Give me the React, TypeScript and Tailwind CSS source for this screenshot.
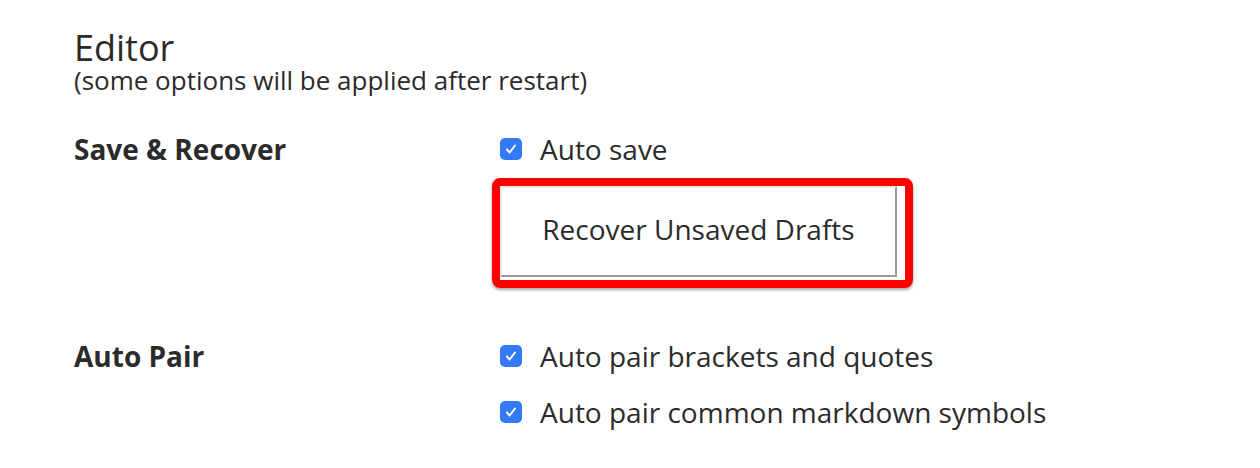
import React, { useState } from 'react';

const Checkbox: React.FC<{ label: string }> = ({ label }) => {
  const [checked, setChecked] = useState(true);
  return (
    <label className="flex h-[56px] items-center gap-[18px] cursor-pointer">
      <button
        type="button"
        onClick={() => setChecked(!checked)}
        className={`flex h-[22px] w-[22px] items-center justify-center rounded-[5px] ${checked ? 'bg-[#3479f6]' : 'border-2 border-gray-400 bg-white'}`}
      >
        {checked && (
          <svg width="14" height="14" viewBox="0 0 14 14" fill="none">
            <path d="M3 7.5l2.6 3L11 3.5" stroke="white" strokeWidth="2" strokeLinecap="round" strokeLinejoin="round" />
          </svg>
        )}
      </button>
      <span className="text-[28px] text-[#2b2b2b]">{label}</span>
    </label>
  );
};

export default function App() {
  return (
    <div className="min-h-[468px] w-[1260px] bg-white pl-[74px] pt-[29px] font-['Open_Sans',sans-serif] text-[#2b2b2b]">
      {/* Header */}
      <h1 className="text-[36px] leading-[38px]">Editor</h1>
      <p className="text-[26px] leading-[26px]">(some options will be applied after restart)</p>

      {/* Save & Recover */}
      <div className="mt-[28px] grid grid-cols-[426px_1fr]">
        <div className="flex h-[56px] items-center text-[28px] font-bold">Save &amp; Recover</div>
        <div>
          <Checkbox label="Auto save" />
          <div className="-ml-[8px] mt-[1px] w-[421px] rounded-[8px] border-[8px] border-[#ff0000] shadow-[0_2px_3px_rgba(0,0,0,0.35)]">
            <div className="pb-[3px] pr-[8px]">
              <button className="h-[91px] w-full border-b-2 border-l-2 border-r-2 border-t-2 border-b-[#9a9a9a] border-l-[#e8e8e8] border-r-[#9a9a9a] border-t-[#e8e8e8] bg-white pb-[5px] text-[28px] text-[#2b2b2b]">
                Recover Unsaved Drafts
              </button>
            </div>
          </div>
        </div>
      </div>

      {/* Auto Pair */}
      <div className="mt-[40px] grid grid-cols-[426px_1fr]">
        <div className="flex h-[56px] items-center text-[28px] font-bold">Auto Pair</div>
        <div>
          <Checkbox label="Auto pair brackets and quotes" />
          <Checkbox label="Auto pair common markdown symbols" />
        </div>
      </div>
    </div>
  );
}
